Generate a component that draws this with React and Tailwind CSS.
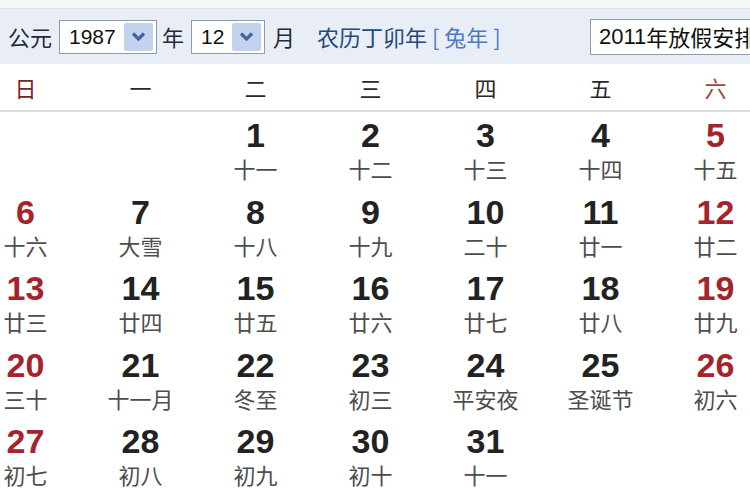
import React from "react";

const lunar = ["十一","十二","十三","十四","十五","十六","大雪","十八","十九","二十","廿一","廿二","廿三","廿四","廿五","廿六","廿七","廿八","廿九","三十","十一月","冬至","初三","平安夜","圣诞节","初六","初七","初八","初九","初十","十一"];

const cjk = { fontFamily: '"Noto Sans CJK SC", "Noto Sans", sans-serif' };
const num = { fontFamily: '"Liberation Sans", Arial, sans-serif' };

function Chevron() {
  return (
    <svg width="15" height="11" viewBox="0 0 15 11">
      <path d="M2 2.5 L7.5 8 L13 2.5" fill="none" stroke="#3f63a6" strokeWidth="3.2" />
    </svg>
  );
}

function Select({ value, width }) {
  return (
    <div className={`flex items-center h-[34px] ${width} border border-[#8d9bb0] bg-white pl-[9px] pr-[3px]`}>
      <span className="flex-1 text-[21px] text-[#111] leading-none" style={num}>{value}</span>
      <span className="flex items-center justify-center w-[29px] h-[28px] bg-[#c3d3ee] rounded-[2px]">
        <Chevron />
      </span>
    </div>
  );
}

export default function App() {
  const cells = [];
  for (let i = 0; i < 2; i++) cells.push(null);
  for (let d = 1; d <= 31; d++) cells.push(d);
  while (cells.length < 35) cells.push(null);
  const weekdays = ["日","一","二","三","四","五","六"];

  return (
    <div className="w-[750px] h-[500px] overflow-hidden bg-white" style={cjk}>
      <div className="h-[8px] bg-[#f7f8fa]" />
      <div className="h-[56px] bg-[#e8edf6] border-t border-[#dfe5ee] flex items-center pl-[8px] text-[22px] text-[#1f2a3a]">
        <span>公元</span>
        <div className="ml-[7px]"><Select value="1987" width="w-[98px]" /></div>
        <span className="ml-[5px]">年</span>
        <div className="ml-[7px]"><Select value="12" width="w-[74px]" /></div>
        <span className="ml-[8px]">月</span>
        <span className="ml-[22px] text-[22px] text-[#23497e] whitespace-pre">农历丁卯年 <span className="text-[#4a7cc4]">[ 兔年 ]</span></span>
        <div className="ml-auto mr-[-60px] h-[36px] w-[220px] border border-[#8d9bb0] bg-white flex items-center pl-[8px] text-[22px] text-[#111] whitespace-nowrap overflow-hidden">
          <span style={num}>2011</span>年放假安排
        </div>
      </div>
      <div className="overflow-hidden">
        <div className="ml-[-32px] w-[805px]">
          <div className="grid grid-cols-7 h-[48px] border-b-2 border-[#dcdcdc] items-center">
            {weekdays.map((w, i) => (
              <div key={w} className={`text-center text-[22px] ${i === 0 ? "text-[#6e2626]" : i === 6 ? "text-[#a0483a]" : "text-[#2a2a2a]"}`}>{w}</div>
            ))}
          </div>
          <div className="grid grid-cols-7 auto-rows-[76.5px]">
            {cells.map((d, idx) => {
              const col = idx % 7;
              const red = col === 0 || col === 6;
              return (
                <div key={idx} className="flex flex-col items-center pt-[5px]">
                  {d && (
                    <>
                      <span className={`text-[34px] font-bold leading-[36px] ${red ? "text-[#a3252b]" : "text-[#222]"}`} style={num}>{d}</span>
                      <span className="text-[22px] leading-[30px] text-[#4d4d4d]">{lunar[d - 1]}</span>
                    </>
                  )}
                </div>
              );
            })}
          </div>
        </div>
      </div>
    </div>
  );
}
